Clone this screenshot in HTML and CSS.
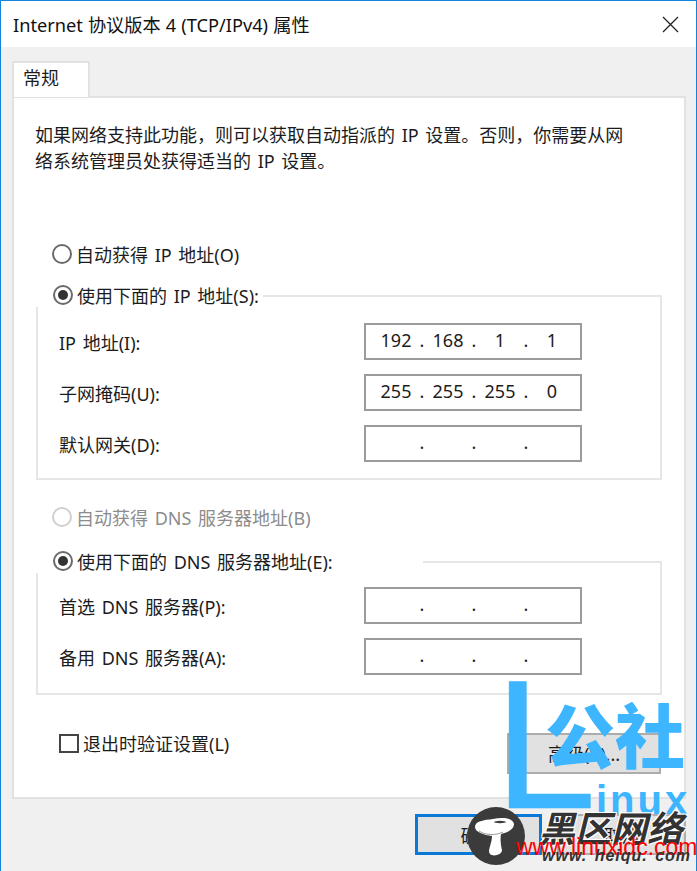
FILE: index.html
```html
<!DOCTYPE html>
<html lang="zh-CN">
<head>
    <meta charset="UTF-8">
    <meta name="viewport" content="width=device-width, initial-scale=1.0">
    <title>Internet 协议版本 4 (TCP/IPv4) 属性</title>
    <link rel="stylesheet" href="styles.css">
</head>
<body>
  <div class="dialog">
    <!-- Title bar -->
    <div class="titlebar">
      <span class="title">Internet 协议版本 4 (TCP/IPv4) 属性</span>
      <svg class="close" width="17" height="17" viewBox="0 0 17 17">
        <path d="M1 1 L16 16 M16 1 L1 16" stroke="#222" stroke-width="1.3" fill="none"/>
      </svg>
    </div>

    <div class="content">
      <div class="tab">常规</div>
      <div class="panel">
        <p class="intro">如果网络支持此功能，则可以获取自动指派的 IP 设置。否则，你需要从网<br>络系统管理员处获得适当的 IP 设置。</p>

        <!-- IP section -->
        <div class="option first-option"><span class="radio"></span>自动获得 IP 地址(O)</div>
        <div class="group group-ip">
          <div class="option legend"><span class="radio checked"></span>使用下面的 IP 地址(S):</div>
          <div class="row">
            <label>IP 地址(I):</label>
            <div class="ip-input"><span>192</span><i>.</i><span>168</span><i>.</i><span>1</span><i>.</i><span>1</span></div>
          </div>
          <div class="row">
            <label>子网掩码(U):</label>
            <div class="ip-input"><span>255</span><i>.</i><span>255</span><i>.</i><span>255</span><i>.</i><span>0</span></div>
          </div>
          <div class="row">
            <label>默认网关(D):</label>
            <div class="ip-input"><span></span><i>.</i><span></span><i>.</i><span></span><i>.</i><span></span></div>
          </div>
        </div>

        <!-- DNS section -->
        <div class="option disabled"><span class="radio"></span>自动获得 DNS 服务器地址(B)</div>
        <div class="group group-dns">
          <div class="option legend"><span class="radio checked"></span>使用下面的 DNS 服务器地址(E):</div>
          <div class="row">
            <label>首选 DNS 服务器(P):</label>
            <div class="ip-input"><span></span><i>.</i><span></span><i>.</i><span></span><i>.</i><span></span></div>
          </div>
          <div class="row">
            <label>备用 DNS 服务器(A):</label>
            <div class="ip-input"><span></span><i>.</i><span></span><i>.</i><span></span><i>.</i><span></span></div>
          </div>
        </div>

        <div class="panel-bottom">
          <div class="check-row"><span class="checkbox"></span>退出时验证设置(L)</div>
          <button class="btn btn-advanced">高级(V)...</button>
        </div>
      </div>

      <div class="actions">
        <button class="btn btn-ok">确定</button>
        <button class="btn btn-cancel">取消</button>
      </div>
    </div>

    <!-- Watermarks on top of the dialog -->
    <div class="mark-l">L</div>
    <div class="mark-gongshe">公社</div>
    <div class="mark-inux">inux</div>
    <svg class="mark-logo" width="58" height="58" viewBox="0 0 58 58">
      <circle cx="29" cy="29" r="29" fill="#3b3b3b"/>
      <path d="M8 20 C8 14 17 13 26 12 C36 10 46 11 47 17 C47 22 42 25 34 27 C33 33 34 39 35 43 C35 48 26 50 23 47 C20 44 25 37 25 29 C17 28 8 25 8 20 Z" fill="#fff"/>
      <ellipse cx="33" cy="15" rx="6" ry="1.2" fill="#3b3b3b"/>
      <path d="M12 24 C18 28 28 29 36 25" stroke="#999" stroke-width="1" fill="none"/>
    </svg>
    <div class="mark-heiqu">黑区网络</div>
    <div class="mark-linuxidc">www.linuxidc.com</div>
    <div class="mark-heiqu-url">www. heiqu. com</div>
  </div>
</body>
</html>
```

FILE: styles.css
```css
/* Global Styles */
html, body {
    margin: 0;
    padding: 0;
}

body {
    font-family: "Noto Sans", "Noto Sans CJK SC", sans-serif;
    font-size: 18px;
    word-spacing: 2px;
    color: #1c1c1c;
}

.dialog {
    position: relative;
    width: 697px;
    height: 871px;
    box-sizing: border-box;
    border: 1px solid #1383dc;
    border-bottom: none;
    background: #f0f0f0;
    overflow: hidden;
}

/* Title bar */
.titlebar {
    height: 46px;
    background: #fff;
    display: flex;
    align-items: center;
    justify-content: space-between;
    padding: 0 17px 0 12px;
}

.title {
    font-size: 18.2px;
    word-spacing: 0.4px;
    color: #111;
}

/* Tab + panel */
.content {
    padding: 14px 10px 0 11px;
}

.tab {
    width: 78px;
    height: 36px;
    box-sizing: border-box;
    line-height: 30px;
    padding-left: 9px;
    background: #fff;
    border: 2px solid #e2e2e2;
    border-bottom: none;
    margin-bottom: -1px;
    position: relative;
    z-index: 1;
}

.panel {
    height: 703px;
    box-sizing: border-box;
    background: #fff;
    border: 2px solid #e2e2e2;
    padding: 24px 22px 0 21px;
}

.intro {
    margin: 0;
    line-height: 26px;
}

/* Radios */
.option {
    display: flex;
    align-items: center;
    height: 24px;
    padding-left: 17px;
    gap: 4px;
    white-space: nowrap;
}

.first-option {
    margin-top: 68px;
}

.disabled {
    color: #8c8c8c;
    margin-top: 25px;
}

.radio {
    width: 20px;
    height: 20px;
    box-sizing: border-box;
    border: 2px solid #6b6b6b;
    border-radius: 50%;
    background: #fff;
    flex: none;
    display: flex;
    align-items: center;
    justify-content: center;
}

.disabled .radio {
    border-color: #d0d0d0;
}

.radio.checked::after {
    content: "";
    width: 10px;
    height: 10px;
    border-radius: 50%;
    background: #333;
}

/* Group boxes */
.group {
    border: 2px solid #e6e6e6;
    height: 185px;
    box-sizing: border-box;
    padding: 0 78px 0 21px;
}

.group-ip {
    margin-top: 29px;
    margin-left: 1px;
}

.group-dns {
    margin-top: 32px;
    margin-left: 1px;
    height: 134px;
}

.legend {
    width: fit-content;
    background: #fff;
    margin: -14px 0 16px -23px;
    padding-right: 4px;
}

.group-dns .legend {
    margin-bottom: 14px;
    padding-right: 90px;
}

.row {
    display: flex;
    align-items: center;
    justify-content: space-between;
    height: 37px;
    margin-bottom: 14px;
}

.ip-input {
    width: 218px;
    height: 37px;
    box-sizing: border-box;
    border: 2px solid #9b9b9b;
    padding-left: 7px;
    display: grid;
    grid-template-columns: 46px 6px 46px 6px 46px 6px 46px;
    line-height: 31px;
    text-align: center;
}

.ip-input i {
    font-style: normal;
}

/* Bottom of the panel */
.panel-bottom {
    display: flex;
    align-items: center;
    justify-content: space-between;
    margin-top: 35px;
    padding: 0 1px 0 24px;
}

.check-row {
    display: flex;
    align-items: center;
    gap: 4px;
    margin-bottom: 20px;
}

.checkbox {
    width: 20px;
    height: 19px;
    box-sizing: border-box;
    border: 2px solid #444;
    background: #fff;
}

.btn {
    font-family: inherit;
    font-size: 18px;
    color: #1c1c1c;
    background: #e1e1e1;
    border: 2px solid #adadad;
    padding: 0;
}

.btn-advanced {
    width: 154px;
    height: 41px;
}

/* Dialog buttons */
.actions {
    display: flex;
    justify-content: flex-end;
    gap: 15px;
    margin-top: 15px;
}

.btn-ok {
    width: 127px;
    height: 41px;
    border: 3px solid #0a78d7;
}

.btn-cancel {
    width: 129px;
    height: 41px;
}

/* Watermarks */
.mark-l,
.mark-gongshe,
.mark-inux,
.mark-logo,
.mark-heiqu,
.mark-linuxidc,
.mark-heiqu-url {
    position: absolute;
    white-space: nowrap;
}

.mark-l {
    left: 493px;
    top: 637px;
    font-family: "Liberation Sans", sans-serif;
    font-size: 184px;
    line-height: 212px;
    color: #3db5ff;
    -webkit-text-stroke: 0.5px #3db5ff;
}

.mark-gongshe {
    left: 544px;
    top: 692px;
    font-family: "Noto Sans CJK SC", sans-serif;
    font-size: 70px;
    font-weight: 900;
    line-height: 80px;
    color: #3db5ff;
}

.mark-inux {
    left: 595px;
    top: 776px;
    font-family: "Liberation Sans", sans-serif;
    font-size: 40px;
    font-weight: 700;
    line-height: 46px;
    letter-spacing: 3px;
    color: #3db5ff;
}

.mark-logo {
    left: 466px;
    top: 806px;
}

.mark-heiqu {
    left: 538px;
    top: 804px;
    font-family: "Noto Sans CJK SC", sans-serif;
    font-size: 36px;
    font-weight: 700;
    font-style: italic;
    line-height: 42px;
    color: #333;
    text-shadow: 1px 1px 0 #fff, -1px -1px 0 #fff, 1px -1px 0 #fff, -1px 1px 0 #fff;
}

.mark-linuxidc {
    left: 515px;
    top: 832px;
    font-family: "Liberation Sans", sans-serif;
    font-size: 23px;
    line-height: 28px;
    word-spacing: 0;
    color: #ff0000;
}

.mark-heiqu-url {
    left: 541px;
    top: 846px;
    font-family: "Liberation Sans", sans-serif;
    font-size: 16px;
    font-weight: 700;
    font-style: italic;
    line-height: 18px;
    letter-spacing: 1px;
    color: #333;
}
```
